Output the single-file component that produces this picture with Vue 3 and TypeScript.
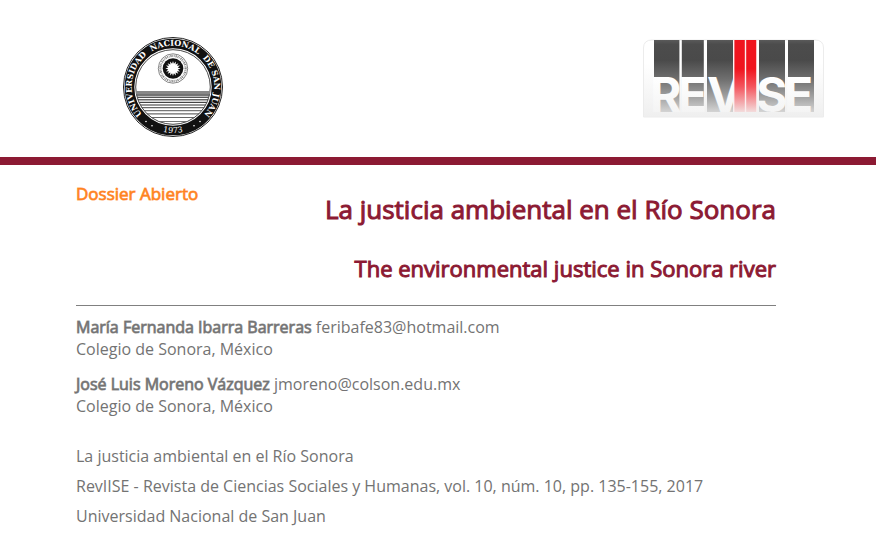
<script setup lang="ts">
interface Author {
  name: string
  email: string
  affiliation: string
}

interface Bar {
  x: number
  width: number
  letter: string
  letterX: number
}

const authors: Author[] = [
  { name: 'María Fernanda Ibarra Barreras', email: 'feribafe83@hotmail.com', affiliation: 'Colegio de Sonora, México' },
  { name: 'José Luis Moreno Vázquez', email: 'jmoreno@colson.edu.mx', affiliation: 'Colegio de Sonora, México' },
]

const source: string[] = [
  'La justicia ambiental en el Río Sonora',
  'RevIISE - Revista de Ciencias Sociales y Humanas, vol. 10, núm. 10, pp. 135-155, 2017',
  'Universidad Nacional de San Juan',
]

const bars: Bar[] = [
  { x: 11, width: 25.4, letter: 'R', letterX: 7 },
  { x: 38.8, width: 22, letter: 'E', letterX: 35 },
  { x: 64, width: 26, letter: 'V', letterX: 64 },
  { x: 116, width: 26, letter: 'S', letterX: 113 },
  { x: 145, width: 26, letter: 'E', letterX: 141 },
]

const ringText = 'UNIVERSIDAD\u00a0\u00a0NACIONAL\u00a0\u00a0DE\u00a0SAN\u00a0JUAN'

const waves = [
  { y: 54, h: 3.2, c: '#888' },
  { y: 57.2, h: 1.6, c: '#555' },
  { y: 59.6, h: 1.4, c: '#555' },
  { y: 62.2, h: 1.2, c: '#444' },
  { y: 64.8, h: 1.2, c: '#444' },
  { y: 67.4, h: 1.2, c: '#555' },
  { y: 70.2, h: 1, c: '#444' },
  { y: 73.2, h: 1, c: '#555' },
  { y: 76.4, h: 1, c: '#444' },
  { y: 80, h: 0.9, c: '#555' },
  { y: 84, h: 0.9, c: '#666' },
]

const star = Array.from({ length: 32 }, (_, i) => {
  const r = i % 2 === 0 ? 7.6 : 4.8
  const a = (i * Math.PI) / 16
  return `${(50 + r * Math.sin(a)).toFixed(2)},${(31.5 - r * Math.cos(a)).toFixed(2)}`
}).join(' ')
</script>

<template>
  <header class="masthead">
    <svg class="seal" viewBox="0 0 100 100" role="img" aria-label="Universidad Nacional de San Juan">
      <defs>
        <clipPath id="sea"><circle cx="50" cy="50" r="37.5" /></clipPath>
        <path id="ring" d="M 20.8 79.2 A 41.3 41.3 0 1 1 79.2 79.2" />
        <path id="ringBottom" d="M 20 84.8 A 46 46 0 0 0 80 84.8" />
      </defs>
      <circle cx="50" cy="50" r="49.5" fill="#fff" stroke="#222" stroke-width="1" />
      <circle cx="50" cy="50" r="43.5" fill="none" stroke="#111" stroke-width="9.6" />
      <circle cx="50" cy="50" r="37.3" fill="#fff" stroke="#333" stroke-width="0.9" />
      <g clip-path="url(#sea)">
        <rect v-for="w in waves" :key="w.y" x="10" width="80" :y="w.y" :height="w.h" :fill="w.c" />
      </g>
      <circle cx="50" cy="31.5" r="14.7" fill="#fff" stroke="#555" stroke-width="0.7" />
      <circle cx="50" cy="31.5" r="12.6" fill="none" stroke="#888" stroke-width="2.2" stroke-dasharray="1 0.8 0.6 0.9 1.3 0.7" />
      <circle cx="50" cy="31.5" r="10.3" fill="#111" />
      <polygon :points="star" fill="#fff" />
      <text class="seal-text"><textPath href="#ring" startOffset="50%">{{ ringText }}</textPath></text>
      <text class="seal-year"><textPath href="#ringBottom" startOffset="50%">1973</textPath></text>
      <g fill="#fff">
        <circle cx="23" cy="84.5" r="0.8" /><circle cx="29" cy="88.8" r="0.8" />
        <circle cx="77" cy="84.5" r="0.8" /><circle cx="71" cy="88.8" r="0.8" />
      </g>
    </svg>

    <svg class="journal" viewBox="0 0 181 79" role="img" aria-label="RevIISE">
      <defs>
        <linearGradient id="card" x1="0" y1="0" x2="0" y2="1">
          <stop offset="0.3" stop-color="#fff" /><stop offset="1" stop-color="#efefef" />
        </linearGradient>
        <linearGradient id="grey" x1="0" y1="0" x2="0" y2="1">
          <stop offset="0" stop-color="#5a5a5a" /><stop offset="0.06" stop-color="#4c4c4c" />
          <stop offset="0.28" stop-color="#4a4a4a" /><stop offset="0.55" stop-color="#707070" />
          <stop offset="0.8" stop-color="#a4a4a4" /><stop offset="1" stop-color="#d4d4d4" />
        </linearGradient>
        <linearGradient id="red" x1="0" y1="0" x2="0" y2="1">
          <stop offset="0" stop-color="#f0141e" /><stop offset="0.4" stop-color="#f0141e" />
          <stop offset="0.65" stop-color="#f4555e" /><stop offset="1" stop-color="#f3dcdc" />
        </linearGradient>
        <linearGradient id="letter" x1="0" y1="0" x2="0" y2="1">
          <stop offset="0.2" stop-color="#fff" /><stop offset="1" stop-color="#f0f0f0" />
        </linearGradient>
      </defs>
      <path d="M0.5 78 V9 Q0.5 1 9 1 H172 Q180.5 1 180.5 9 V78 Z" fill="url(#card)" stroke="#ececec" />
      <g v-for="b in bars" :key="b.x">
        <rect :x="b.x" y="1" :width="b.width" height="72" fill="url(#grey)" />
        <text :x="b.letterX" y="73" class="letter">{{ b.letter }}</text>
      </g>
      <rect x="90.4" y="1" width="23.6" height="72" fill="#fbeeee" />
      <rect x="91.4" y="1" width="10.4" height="72" fill="url(#red)" />
      <rect x="103.2" y="1" width="10" height="72" fill="url(#red)" />
    </svg>
  </header>

  <main class="article">
    <div class="heading">
      <p class="section">Dossier Abierto</p>
      <div class="titles">
        <h1>La justicia ambiental en el Río Sonora</h1>
        <h2>The environmental justice in Sonora river</h2>
      </div>
    </div>

    <section class="authors">
      <p v-for="a in authors" :key="a.email">
        <span class="name">{{ a.name }}</span> {{ a.email }}<br />{{ a.affiliation }}
      </p>
    </section>

    <section class="source">
      <p v-for="line in source" :key="line">{{ line }}</p>
    </section>
  </main>
</template>

<style>
body {
  background: #fff;
}
</style>

<style scoped>
.masthead {
  display: flex;
  justify-content: space-between;
  align-items: flex-start;
  padding: 37px 52px 20px 123px;
  border-bottom: 8px solid #8c1a33;
}
.seal {
  width: 100px;
  height: 100px;
}
.journal {
  width: 181px;
  height: 79px;
  margin-top: 2px;
}
.seal-text {
  font: bold 8px 'DejaVu Serif', serif;
  fill: #fff;
  text-anchor: middle;
}
.seal-year {
  font: 8px 'DejaVu Serif', serif;
  fill: #fff;
  text-anchor: middle;
}
.letter {
  font: 700 48px Inter, sans-serif;
  fill: url(#letter);
}
.article {
  padding: 18px 100px 16px 76px;
  font: 16px/22px 'Open Sans', sans-serif;
  color: #737373;
}
.article p,
.article h1,
.article h2 {
  margin: 0;
}
.heading {
  display: flex;
  justify-content: space-between;
  padding-bottom: 19px;
  border-bottom: 1px solid #808080;
}
.section,
.titles h1,
.titles h2,
.name {
  font-weight: 400;
  -webkit-text-stroke: 1px currentColor;
}
.name {
  -webkit-text-stroke-color: rgb(115 115 115 / 75%);
}
.section {
  font-size: 17px;
  color: #ff8220;
  -webkit-text-stroke-color: rgb(255 130 32 / 75%);
}
.titles {
  display: flex;
  flex-direction: column;
  gap: 24px;
  padding-top: 9px;
  text-align: right;
  color: #8c1a33;
}
.titles h1 {
  font-size: 26px;
  line-height: 35px;
}
.titles h2 {
  font-size: 22px;
  line-height: 35px;
}
.authors {
  display: grid;
  gap: 13px;
  padding-top: 10px;
}
.source {
  display: grid;
  gap: 8px;
  padding-top: 28px;
}
</style>
